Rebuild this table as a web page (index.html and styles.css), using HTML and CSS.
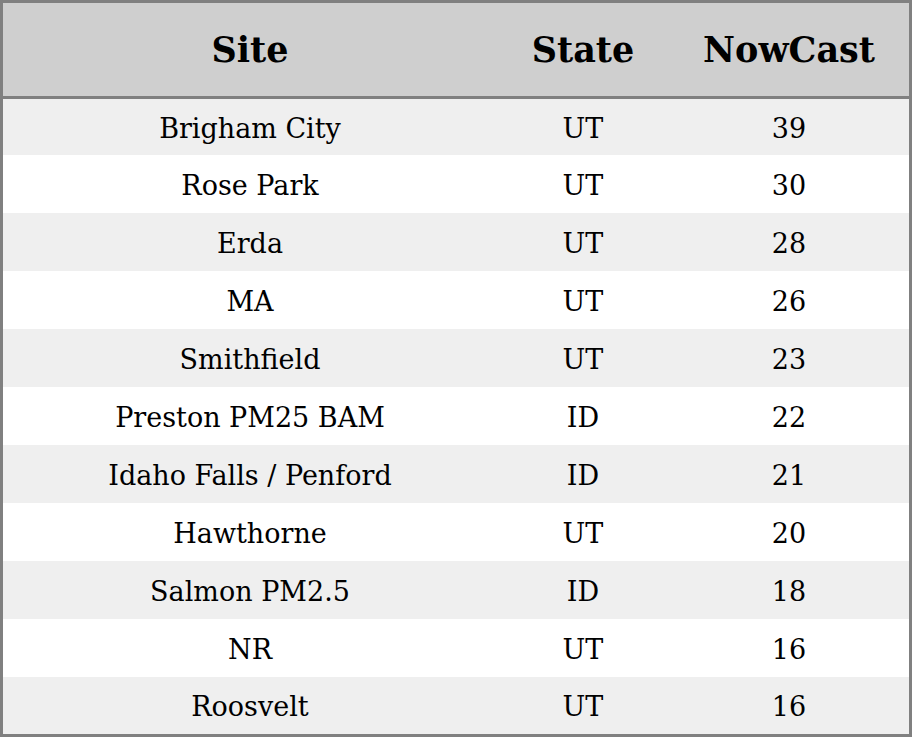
FILE: index.html
```html
<!DOCTYPE html>
<html>
<head>
<meta charset="utf-8">
<link rel="stylesheet" href="styles.css">
</head>
<body>
<table class="aq">
<colgroup><col class="c-site"><col class="c-state"><col class="c-now"></colgroup>
<thead>
<tr><th>Site</th><th>State</th><th>NowCast</th></tr>
</thead>
<tbody>
<tr><td>Brigham City</td><td>UT</td><td>39</td></tr>
<tr><td>Rose Park</td><td>UT</td><td>30</td></tr>
<tr><td>Erda</td><td>UT</td><td>28</td></tr>
<tr><td>MA</td><td>UT</td><td>26</td></tr>
<tr><td>Smithfield</td><td>UT</td><td>23</td></tr>
<tr><td>Preston PM25 BAM</td><td>ID</td><td>22</td></tr>
<tr><td>Idaho Falls / Penford</td><td>ID</td><td>21</td></tr>
<tr><td>Hawthorne</td><td>UT</td><td>20</td></tr>
<tr><td>Salmon PM2.5</td><td>ID</td><td>18</td></tr>
<tr><td>NR</td><td>UT</td><td>16</td></tr>
<tr><td>Roosvelt</td><td>UT</td><td>16</td></tr>
</tbody>
</table>
</body>
</html>
```
FILE: styles.css
```css
html, body { margin: 0; padding: 0; background: #fff; }
.aq {
  width: 912px;
  border-collapse: separate;
  border-spacing: 0;
  border: 3px solid #808080;
  table-layout: fixed;
  font-family: "DejaVu Serif", serif;
  color: #000;
}
.c-site { width: 494px; }
.c-state { width: 172px; }
.c-now { width: 240px; }
.aq th {
  background: #cfcfcf;
  height: 93px;
  padding: 0;
  font-size: 35px;
  font-weight: bold;
  border-bottom: 3px solid #808080;
  text-align: center;
}
.aq td {
  height: 56px;
  padding: 2px 0 0 0;
  font-size: 27px;
  text-align: center;
}
.aq tbody tr:first-child td { height: 54px; }
.aq tbody tr:last-child td { height: 55px; }
.aq tbody tr:nth-child(odd) td { background: #efefef; }
.aq tbody tr:nth-child(even) td { background: #fff; }
```
